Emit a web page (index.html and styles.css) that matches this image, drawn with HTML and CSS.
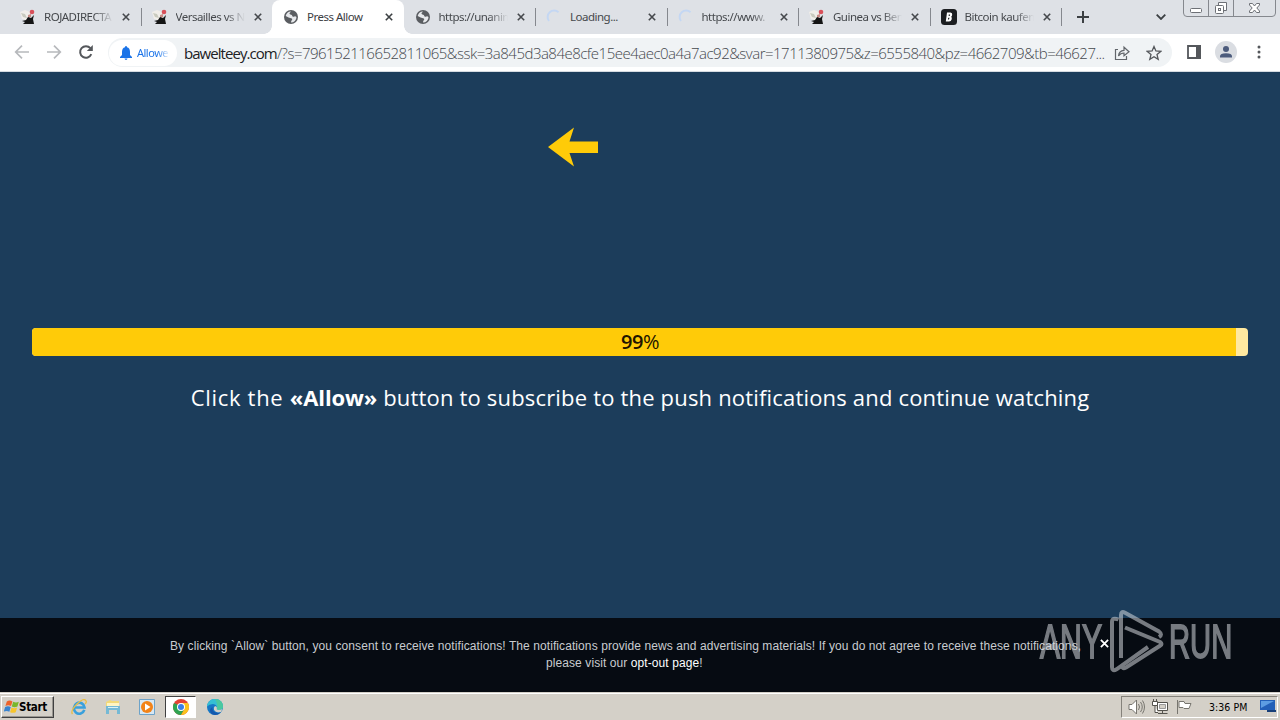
FILE: index.html
```html
<!DOCTYPE html>
<html lang="en">
<head>
<meta charset="utf-8">
<title>Press Allow</title>
<link rel="stylesheet" href="styles.css">
</head>
<body>
<svg class="defs" width="0" height="0" aria-hidden="true">
  <symbol id="roja" viewBox="0 0 16 16"><path d="M0 3l5-2 5 2 1 5-5 3-4-1z" fill="#f1eee9"/><path d="M1 4l4 1 2 4-4-1z" fill="#c9cabe"/><circle cx="12" cy="3" r="2.3" fill="#d9505a"/><path d="M8 6l3-1v3l-3 1z" fill="#c98d86"/><path d="M2 12l4-1 2-3 3 1 3-3-1 4 1 5H3l2-2z" fill="#151515"/></symbol>
  <symbol id="globe" viewBox="0 0 16 16"><circle cx="8" cy="8" r="7" fill="#5a5d61"/><path d="M8 2.400c-.8 1-2 1.600-1.300 2.700.8 1 2.200.3 2.500 1.600.3 1.400 2 1 3 .5l1.300.8A5.600 5.600 0 0 1 8 13.600l.3-1.800c1-.7 1.300-1.500.5-2.200L5.600 8.500 2.700 7A5.600 5.600 0 0 1 8 2.400z" fill="#e6e8eb"/></symbol>
  <symbol id="spin" viewBox="0 0 16 16"><path d="M3 12A6.500 6.500 0 0 1 12.500 3.200" fill="none" stroke="#c4d7f3" stroke-width="2"/></symbol>
  <symbol id="bit" viewBox="0 0 16 16"><rect width="16" height="16" rx="3.500" fill="#1c1e21"/><path d="M6 3.500h3.500q2 .2 1.700 2.200-.2 1.500-1 2 .9.700.5 2.500-.5 2.300-2.700 2.300H4.800zM7.700 5.500v1.500h1l.4-1.500zM7.200 8.700l-.3 1.800H8l.5-1.800z" fill="#fff" fill-rule="evenodd"/></symbol>
  <symbol id="x" viewBox="0 0 8 8"><path d="M.8.8l6.400 6.400M7.200.8L.8 7.200" stroke="currentColor" stroke-width="1.600" fill="none"/></symbol>
</svg>

<header class="tabstrip">
  <div class="tab"><svg class="fav"><use href="#roja"/></svg><span class="title">ROJADIRECTA</span><svg class="close"><use href="#x"/></svg></div>
  <div class="tab nosep"><svg class="fav"><use href="#roja"/></svg><span class="title">Versailles vs N</span><svg class="close"><use href="#x"/></svg></div>
  <div class="tab active"><svg class="fav"><use href="#globe"/></svg><span class="title full">Press Allow</span><svg class="close"><use href="#x"/></svg></div>
  <div class="tab"><svg class="fav"><use href="#globe"/></svg><span class="title">https://unanin</span><svg class="close"><use href="#x"/></svg></div>
  <div class="tab"><svg class="fav"><use href="#spin"/></svg><span class="title full">Loading...</span><svg class="close"><use href="#x"/></svg></div>
  <div class="tab"><svg class="fav"><use href="#spin"/></svg><span class="title">https://www.</span><svg class="close"><use href="#x"/></svg></div>
  <div class="tab"><svg class="fav"><use href="#roja"/></svg><span class="title">Guinea vs Ben</span><svg class="close"><use href="#x"/></svg></div>
  <div class="tab"><svg class="fav"><use href="#bit"/></svg><span class="title">Bitcoin kaufen</span><svg class="close"><use href="#x"/></svg></div>
  <svg class="plus" viewBox="0 0 12 12"><path d="M6 0v12M0 6h12" stroke="#3c4043" stroke-width="2"/></svg>
  <svg class="chev" viewBox="0 0 10 6"><path d="M.7.7L5 5 9.300.7" fill="none" stroke="#3c4043" stroke-width="1.800"/></svg>
  <svg class="winbtns" viewBox="0 0 94 17" fill="none" stroke="#6d7076">
    <path d="M.5 0v13q0 3.500 3.500 3.500h85q3.500 0 3.500-3.500V0M25.500 0v16M50.500 0v16" stroke="#85888e"/>
    <rect x="7.500" y="8.500" width="11" height="4" rx="1" fill="#fff"/>
    <path d="M35.500 5V2.500h8v8H41" fill="#fff"/><rect x="32.500" y="5.500" width="8" height="8" rx="1" fill="#fff"/><rect x="35.500" y="8.500" width="2" height="2"/>
    <path d="M66.500 3.500h3l2 2.500 2-2.500h3v1.500L73.800 8l2.700 3v1.500h-3l-2-2.500-2 2.500h-3V11l2.700-3-2.700-3z" fill="#fff"/>
  </svg>
</header>

<nav class="toolbar">
  <svg class="nav" viewBox="0 0 16 16"><path d="M15 8H2M8 1.700L1.700 8 8 14.300" fill="none" stroke="#b7b9bc" stroke-width="1.700"/></svg>
  <svg class="nav" viewBox="0 0 16 16"><path d="M1 8h13M8 1.700L14.300 8 8 14.300" fill="none" stroke="#b7b9bc" stroke-width="1.700"/></svg>
  <svg class="nav reload" viewBox="0 0 16 16"><path d="M13.300 10.200A5.800 5.800 0 1 1 12.400 4.200" fill="none" stroke="#54575b" stroke-width="2"/><path d="M14.800 1v6H8.800z" fill="#54575b"/></svg>
  <div class="omnibox">
    <div class="chip"><svg class="bell" viewBox="0 0 12 14"><path d="M6 0q1 0 1 1.300Q10 2 10 6v3l2 2v1H0v-1l2-2V6q0-4 3-4.700Q5 0 6 0zM4.500 12.600h3Q7.300 14 6 14t-1.500-1.400z" fill="#1a73e8"/></svg><span class="chiptext">Allowe</span></div>
    <div class="url"><span class="host">bawelteey.com</span><span class="path">/?s=796152116652811065&amp;ssk=3a845d3a84e8cfe15ee4aec0a4a7ac92&amp;svar=1711380975&amp;z=6555840&amp;pz=4662709&amp;tb=46627...</span></div>
    <svg class="share" viewBox="0 0 16 16" fill="none" stroke="#62666b" stroke-width="1.200"><path d="M4 4.500H1.500v10h11V11"/><path d="M4.500 11q.5-5.500 5.500-5.700V2.200L15 6.700l-5 4V8q-3.500 0-5.500 3z"/></svg>
    <svg class="star" viewBox="0 0 16 16"><path d="M8 1.500l1.900 4.500 4.800.4-3.700 3.200 1.200 4.800L8 11.800l-4.200 2.600L5 9.600 1.300 6.400l4.800-.4z" fill="none" stroke="#54575b" stroke-width="1.300"/></svg>
  </div>
  <svg class="panel" viewBox="0 0 14 14"><path d="M1 1h12v12H1z" fill="none" stroke="#54575b" stroke-width="1.800"/><path d="M9 0h5v14H9z" fill="#54575b"/></svg>
  <svg class="avatar" viewBox="0 0 22 22"><circle cx="11" cy="11" r="11" fill="#dadde2"/><circle cx="11" cy="8" r="3" fill="#4c5b7c"/><path d="M5 16.500v-1.300Q5 12.300 11 12.300t6 2.900v1.300z" fill="#4c5b7c"/></svg>
  <svg class="dots" viewBox="0 0 4 14" fill="#54575b"><circle cx="2" cy="2" r="1.500"/><circle cx="2" cy="7" r="1.500"/><circle cx="2" cy="12" r="1.500"/></svg>
</nav>

<main class="page">
  <svg class="arrow" viewBox="0 0 50 40"><path d="M0 20L26 .5l-4.500 14H50v11.500H21.500L26 39.500z" fill="#ffcb08"/></svg>
  <div class="progress"><div class="fill" style="width:99%"></div><span class="pct"><b>99</b>%</span></div>
  <p class="message"><span class="lead">Click the </span><b>«Allow»</b><span class="rest"> button to subscribe to the push notifications and continue watching</span></p>
  <footer class="consent">
    <p class="line1">By clicking `Allow` button, you consent to receive notifications! The notifications provide news and advertising materials! If you do not agree to receive these notifications,</p>
    <p class="line2">please visit our <a class="opt">opt-out page</a>!</p>
    <svg class="dismiss"><use href="#x"/></svg>
  </footer>
  <div class="watermark">
    <svg width="194" height="64" viewBox="0 0 194 64">
      <text class="brand" transform="translate(2 48.500) scale(.62 1)" textLength="100" lengthAdjust="spacingAndGlyphs">ANY</text>
      <text class="brand" transform="translate(131 48.500) scale(.62 1)" textLength="102" lengthAdjust="spacingAndGlyphs">RUN</text>
      <g class="mark"><path d="M80.500 10.500Q74 8 74 13v45q0 5 4.500 2.300L110 38"/><path d="M83 49V6q0-4.500 4-2.300L121 22.500q4 3 0 5.500M87 18.500L122 33q3 2 0 3.800L88 58.500q-4 2-4.500-2"/></g>
    </svg>
  </div>
</main>

<div class="taskbar">
  <div class="start"><svg class="flag" viewBox="0 0 16 16"><path d="M3 2q3-2 6 0L7.500 7q-3-1.500-6 0z" fill="#ed632a"/><path d="M9.800 2.500q3 1.500 6 0L14.300 7.500q-3 1.500-6 0z" fill="#78b72a"/><path d="M1.200 8q3-1.500 6 0L5.700 13q-3-1.500-6 0z" fill="#3984cf"/><path d="M8 8.500q3 1.500 6 0l-1.500 5q-3 1.500-6 0z" fill="#f7c52d"/></svg><span>Start</span></div>
  <svg class="app ie" viewBox="0 0 16 16"><path d="M13.300 10.800A5.300 5.500 0 1 1 13.500 8.500H4" fill="none" stroke="#39a0dc" stroke-width="2.600"/><path d="M1.500 15Q-1 12 6 5t9-3q1 1-1 3" fill="none" stroke="#e8bd46" stroke-width="1.300"/></svg>
  <svg class="app" viewBox="0 0 16 16"><path d="M1 3l4-2 2 1h7v6H1z" fill="#f2d978"/><path d="M2 4h12v3H2z" fill="#fff4c2"/><path d="M1 7h14v8h-3v-4H4v4H1z" fill="#75b9d5"/><path d="M3 8h10v1H3z" fill="#d8f0f5"/></svg>
  <svg class="app" viewBox="0 0 16 16"><path d="M.5.5h15v15H.5z" fill="#d7e8f4" stroke="#6da3c9"/><circle cx="8" cy="8" r="6" fill="#f28318"/><path d="M6 4.500v7L11.500 8z" fill="#fff"/></svg>
  <div class="running"><svg class="app" viewBox="0 0 16 16"><circle cx="8" cy="8" r="8" fill="#e34234"/><path d="M1.070 4A8 8 0 0 0 8 16l4-7z" fill="#2fa452"/><path d="M8 4h6.930A8 8 0 0 1 8 16l3.500-6z" fill="#fbc21e"/><circle cx="8" cy="8" r="4" fill="#fff"/><circle cx="8" cy="8" r="3" fill="#397fe8"/></svg></div>
  <svg class="app edge" viewBox="0 0 16 16"><circle cx="8" cy="8" r="8" fill="#1677c5"/><path d="M0 7.500A8 8 0 0 1 16 8q-.5 3-4.500 3-2.500-.2-1.500-2Q10 5.500 6 5 2 5 0 7.500z" fill="#35bfd3"/><path d="M8 0q8 .5 8 8-.5 3-4.500 3-2.500-.2-1.500-2 1-4-2-9z" fill="#4bc89f"/><path d="M10 9q-1 1.800 1.500 2 2.500 0 3.900-1L14 13q-5 1.500-7-2-.8-2.500 1-4 2 .5 2 2z" fill="#d4d0c8"/><path d="M5.500 8q-1 5 5 6l3.300-.5Q11 16 8 16 3 15.500 3 11q.5-2 2.500-3z" fill="#1558ad"/></svg>
  <div class="tray">
    <svg width="17" height="16" viewBox="0 0 17 16" fill="#fff" stroke="#77756f"><path d="M1 5.500h3L8.500 1v14L4 10.500H1z"/><path d="M10.500 5q2 3 0 6M12.500 3q3.500 5 0 10M14.500 1.500q4 6.500 0 13" fill="none"/></svg>
    <svg class="net" width="17" height="16" viewBox="0 0 17 16" fill="#fff" stroke="#55534e"><path d="M5.500 3.500h10v8h-10zM6 14.500h9.500M10.500 12v2"/><path d="M7.500 5.500h6v4h-6z" fill="#d4d0c8" stroke="#999"/><path d="M.5 2.500h5v4h-5zM1.500 0v2M4.500 0v2M3 7v6.500h3"/></svg>
    <svg width="17" height="16" viewBox="0 0 17 16" fill="#fff" stroke="#77756f"><path d="M1.500 1v14M3 2.500h5l1 2h6l-2 5H8l-1-1H3z"/></svg>
    <span class="clock">3:36 PM</span>
    <svg class="desk" width="16" height="13" viewBox="0 0 16 13"><path d="M0 0h15v10H0z" fill="#2360b8"/><path d="M1 1h13L1 8z" fill="#5d9de2"/><path d="M7 10h9v2H7z" fill="#183f79"/></svg>
  </div>
</div>
</body>
</html>
```

FILE: styles.css
```css
* { box-sizing: border-box; }
body { margin: 0; width: 1280px; height: 720px; overflow: hidden; display: flex; flex-direction: column; font-family: "DejaVu Sans Condensed", "DejaVu Sans", sans-serif; }
svg { flex: none; display: block; }
p { margin: 0; white-space: nowrap; }
.defs { position: absolute; }

.tabstrip { height: 34px; flex: none; display: flex; align-items: center; background: #dee1e6; padding-left: 9px; position: relative; }
.tab { width: 131.5px; height: 34px; flex: none; display: flex; align-items: center; padding-left: 11px; position: relative; color: #45484c; }
.tab:not(.nosep):not(.active)::after { content: ""; position: absolute; right: -1px; top: 8px; width: 1px; height: 18px; background: #85888e; }
.active { background: #fff; border-radius: 8px 8px 0 0; color: #3c4043; }
.active::before, .active::after { content: ""; position: absolute; bottom: 0; width: 8px; height: 8px; }
.active::before { left: -8px; background: radial-gradient(circle at 0 0, transparent 7.5px, #fff 8px); }
.active::after { right: -8px; background: radial-gradient(circle at 100% 0, transparent 7.5px, #fff 8px); }
.fav { width: 16px; height: 16px; }
.title { width: 69px; margin-left: 8px; overflow: hidden; white-space: nowrap; font-family: "Noto Sans", sans-serif; font-size: 11.5px; letter-spacing: -.5px; line-height: 16px; -webkit-mask-image: linear-gradient(90deg, #000 72%, transparent); mask-image: linear-gradient(90deg, #000 72%, transparent); }
.full { -webkit-mask-image: none; mask-image: none; }
.close { width: 8px; height: 8px; margin-left: 9px; }
.plus { width: 12px; height: 12px; margin-left: 16px; }
.chev { width: 10px; height: 6px; margin-left: 67px; }
.winbtns { width: 94px; height: 17px; margin-left: 17px; align-self: flex-start; }

.toolbar { height: 38px; flex: none; background: #fff; border-bottom: 1px solid #d5dbe1; display: flex; align-items: center; padding-left: 14px; }
.nav { width: 16px; height: 16px; margin-right: 16px; margin-top: -1px; }
.omnibox { width: 1064px; height: 29px; margin-left: -2px; border-radius: 15px; background: #f0f3f5; display: flex; align-items: center; padding-left: 1px; }
.chip { width: 68px; height: 26px; flex: none; border-radius: 13px; background: #fff; display: flex; align-items: center; padding-left: 11px; }
.bell { width: 12px; height: 14px; }
.chiptext { width: 33px; margin-left: 5px; overflow: hidden; color: #1a73e8; font-family: "Noto Sans", sans-serif; font-size: 11px; letter-spacing: -.5px; line-height: 16px; -webkit-mask-image: linear-gradient(90deg, #000 60%, transparent); mask-image: linear-gradient(90deg, #000 60%, transparent); }
.url { width: 922px; flex: none; margin-left: 7px; display: flex; font-family: "Open Sans", sans-serif; font-size: 15px; line-height: 20px; white-space: nowrap; }
.host { width: 93px; flex: none; color: #202124; letter-spacing: -.95px; }
.path { font-weight: 300; color: #44484d; letter-spacing: -.51px; }
.share { width: 16px; height: 16px; margin-left: 8px; }
.star { width: 16px; height: 16px; margin-left: 16px; }
.panel { width: 14px; height: 14px; margin-left: 15px; margin-top: -1px; }
.avatar { width: 22px; height: 22px; margin-left: 14px; margin-top: -1px; }
.dots { width: 4px; height: 14px; margin-left: 20px; margin-top: -1px; }

.page { height: 620px; flex: none; background: #1c3d5b; display: flex; flex-direction: column; position: relative; }
.arrow { width: 50px; height: 40px; margin: 55px 0 0 548px; }
.progress { height: 28px; margin: 161px 32px 0; border-radius: 4px; overflow: hidden; background: #ffe9a0; display: grid; align-items: center; }
.fill { grid-area: 1 / 1; height: 28px; background: #ffcb08; }
.pct { grid-area: 1 / 1; height: 28px; text-align: center; font: 20px/27px "Open Sans", sans-serif; letter-spacing: -.4px; color: #211400; }
.pct b { font-weight: 600; }
.message { height: 32px; margin-top: 25px; text-align: center; white-space: pre; color: #fff; font: 22px/32px "Open Sans", sans-serif; }
.lead { letter-spacing: .7px; }
.rest { letter-spacing: .18px; }
.message b { letter-spacing: -.1px; }
.consent { height: 74px; margin-top: auto; background: #060b12; color: #c9ccd0; font: 12px/17px "Liberation Sans", sans-serif; letter-spacing: .085px; position: relative; padding-top: 20px; }
.line1 { margin-left: 170px; }
.line2 { margin-left: 546px; }
.opt { color: #fff; }
.dismiss { position: absolute; left: 1100px; top: 21px; width: 9px; height: 9px; color: #fff; z-index: 3; }
.watermark { position: absolute; left: 1038px; top: 537px; z-index: 2; opacity: .55; }
.brand { font-family: "Liberation Sans", sans-serif; font-size: 49px; fill: #d4d8dd; stroke: #d4d8dd; stroke-width: 1.8; }
.mark { fill: none; stroke: #d4d8dd; stroke-width: 4; }

.taskbar { height: 28px; flex: none; background: #d4d0c8; border-top: 1px solid #d4d0c8; box-shadow: inset 0 1px #fff; display: flex; align-items: center; padding: 1px 2px 1px 1px; }
.start { width: 53px; height: 22px; border: 1px solid; border-color: #fff #404040 #404040 #fff; box-shadow: inset -1px -1px #999690; display: flex; align-items: center; padding-left: 2px; font: bold 11.5px "DejaVu Sans Condensed", sans-serif; letter-spacing: -.3px; }
.flag { width: 15px; height: 16px; }
.app { width: 16px; height: 16px; margin-left: 18px; }
.ie { margin-left: 17px; }
.running { width: 31px; height: 22px; margin-left: 10px; border: 1px solid; border-color: #404040 #fff #fff #404040; background: #fff; display: flex; align-items: center; justify-content: center; }
.running .app { margin: 0; }
.edge { margin-left: 11px; }
.tray { width: 157px; height: 22px; margin-left: auto; border: 1px solid; border-color: #85827b #fff #fff #85827b; display: flex; align-items: center; gap: 7px; padding-left: 6px; }
.clock { width: 41px; margin-left: 9px; font: 10.5px "DejaVu Sans Condensed", sans-serif; letter-spacing: .05px; white-space: nowrap; }
.desk { margin-left: 3px; }
```
